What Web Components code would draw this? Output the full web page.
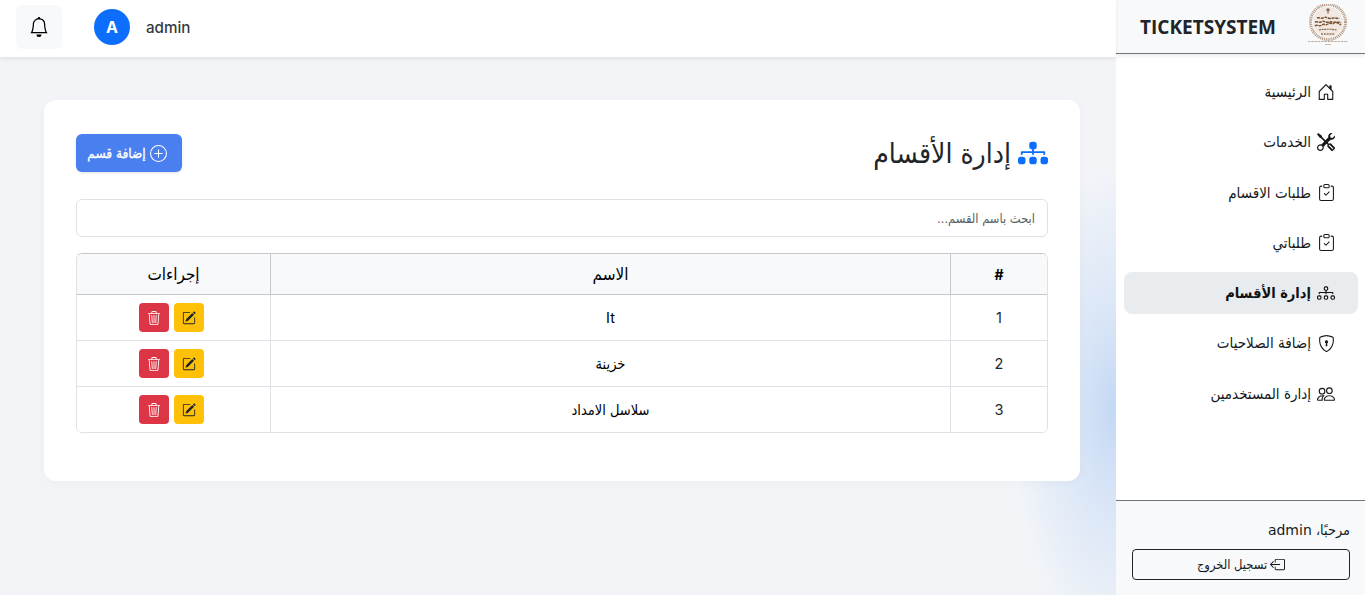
<!DOCTYPE html>
<html lang="ar" dir="rtl">
<head>
<meta charset="utf-8">
<title>إدارة الأقسام</title>
<style>
  html, body { margin: 0; height: 100%; overflow: hidden; }
  body {
    font-family: Inter, "DejaVu Sans Condensed", "DejaVu Sans", sans-serif;
    color: #212529;
    background: #f2f4f8;
  }
</style>
</head>
<body>
<app-shell>
  <side-bar slot="side">
    <nav-item icon="house">الرئيسية</nav-item>
    <nav-item icon="tools">الخدمات</nav-item>
    <nav-item icon="clipboard" size="17">طلبات الاقسام</nav-item>
    <nav-item icon="clipboard" size="17">طلباتي</nav-item>
    <nav-item icon="diagram" active>إدارة الأقسام</nav-item>
    <nav-item icon="shield" size="17">إضافة الصلاحيات</nav-item>
    <nav-item icon="people">إدارة المستخدمين</nav-item>
  </side-bar>
  <top-bar slot="top" user="admin"></top-bar>
  <dept-card>
    <dept-row num="1" name="It"></dept-row>
    <dept-row num="2" name="خزينة"></dept-row>
    <dept-row num="3" name="سلاسل الامداد"></dept-row>
  </dept-card>
</app-shell>

<script>
const ICONS = {
  bell: 'M8 16a2 2 0 0 0 2-2H6a2 2 0 0 0 2 2M8 1.918l-.797.161A4 4 0 0 0 4 6c0 .628-.134 2.197-.459 3.742-.16.767-.376 1.566-.663 2.258h10.244c-.287-.692-.502-1.49-.663-2.258C12.134 8.197 12 6.628 12 6a4 4 0 0 0-3.203-3.92zM14.22 12c.223.447.481.801.78 1H1c.299-.199.557-.553.78-1C2.68 10.2 3 6.88 3 6c0-2.42 1.72-4.44 4.005-4.901a1 1 0 1 1 1.99 0A5 5 0 0 1 13 6c0 .88.32 4.2 1.22 6',
  house: 'M8.354 1.146a.5.5 0 0 0-.708 0l-6 6A.5.5 0 0 0 1.5 7.5v7a.5.5 0 0 0 .5.5h4.5a.5.5 0 0 0 .5-.5v-4h2v4a.5.5 0 0 0 .5.5H14a.5.5 0 0 0 .5-.5v-7a.5.5 0 0 0-.146-.354L13 5.793V2.5a.5.5 0 0 0-.5-.5h-1a.5.5 0 0 0-.5.5v1.293zM2.5 14V7.707l5.5-5.5 5.5 5.5V14H10v-4a.5.5 0 0 0-.5-.5h-3a.5.5 0 0 0-.5.5v4z',
  tools: 'M1 0 0 1l2.2 3.081a1 1 0 0 0 .815.419h.07a1 1 0 0 1 .708.293l2.675 2.675-2.617 2.654A3.003 3.003 0 0 0 0 13a3 3 0 1 0 5.878-.851l2.654-2.617.968.968-.305.914a1 1 0 0 0 .242 1.023l3.27 3.27a.997.997 0 0 0 1.414 0l1.586-1.586a.997.997 0 0 0 0-1.414l-3.27-3.27a1 1 0 0 0-1.023-.242L10.5 9.5l-.96-.96 2.68-2.643A3.005 3.005 0 0 0 16 3q0-.405-.102-.777l-2.14 2.141L12 4l-.364-1.757L13.777.102a3 3 0 0 0-3.675 3.68L7.462 6.46 4.793 3.793a1 1 0 0 1-.293-.707v-.071a1 1 0 0 0-.419-.814zm9.646 10.646a.5.5 0 0 1 .708 0l2.914 2.915a.5.5 0 0 1-.707.707l-2.915-2.914a.5.5 0 0 1 0-.708M3 11l.471.242.529.026.287.445.445.287.026.529L5 13l-.242.471-.026.529-.445.287-.287.445-.529.026L3 15l-.471-.242L2 14.732l-.287-.445L1.268 14l-.026-.529L1 13l.242-.471.026-.529.445-.287.287-.445.529-.026z',
  clipboard: 'M10.854 7.146a.5.5 0 0 1 0 .708l-3 3a.5.5 0 0 1-.708 0l-1.5-1.5a.5.5 0 1 1 .708-.708L7.5 9.793l2.646-2.647a.5.5 0 0 1 .708 0M4 1.5H3a2 2 0 0 0-2 2V14a2 2 0 0 0 2 2h10a2 2 0 0 0 2-2V3.5a2 2 0 0 0-2-2h-1v1h1a1 1 0 0 1 1 1V14a1 1 0 0 1-1 1H3a1 1 0 0 1-1-1V3.5a1 1 0 0 1 1-1h1zM9.5 1a.5.5 0 0 1 .5.5v1a.5.5 0 0 1-.5.5h-3a.5.5 0 0 1-.5-.5v-1a.5.5 0 0 1 .5-.5zm-3-1A1.5 1.5 0 0 0 5 1.5v1A1.5 1.5 0 0 0 6.5 4h3A1.5 1.5 0 0 0 11 2.5v-1A1.5 1.5 0 0 0 9.5 0z',
  diagram: 'M6 3.5A1.5 1.5 0 0 1 7.5 2h1A1.5 1.5 0 0 1 10 3.5v1A1.5 1.5 0 0 1 8.5 6v1H14a.5.5 0 0 1 .5.5v1a.5.5 0 0 1-1 0V8h-5v.5a.5.5 0 0 1-1 0V8h-5v.5a.5.5 0 0 1-1 0v-1A.5.5 0 0 1 2 7h5.5V6A1.5 1.5 0 0 1 6 4.5zM8.5 5a.5.5 0 0 0 .5-.5v-1a.5.5 0 0 0-.5-.5h-1a.5.5 0 0 0-.5.5v1a.5.5 0 0 0 .5.5zM0 11.5A1.5 1.5 0 0 1 1.5 10h1A1.5 1.5 0 0 1 4 11.5v1A1.5 1.5 0 0 1 2.5 14h-1A1.5 1.5 0 0 1 0 12.5zm1.5-.5a.5.5 0 0 0-.5.5v1a.5.5 0 0 0 .5.5h1a.5.5 0 0 0 .5-.5v-1a.5.5 0 0 0-.5-.5zm4.5.5A1.5 1.5 0 0 1 7.5 10h1a1.5 1.5 0 0 1 1.5 1.5v1A1.5 1.5 0 0 1 8.5 14h-1A1.5 1.5 0 0 1 6 12.5zm1.5-.5a.5.5 0 0 0-.5.5v1a.5.5 0 0 0 .5.5h1a.5.5 0 0 0 .5-.5v-1a.5.5 0 0 0-.5-.5zm4.5.5a1.5 1.5 0 0 1 1.5-1.5h1a1.5 1.5 0 0 1 1.5 1.5v1a1.5 1.5 0 0 1-1.5 1.5h-1a1.5 1.5 0 0 1-1.5-1.5zm1.5-.5a.5.5 0 0 0-.5.5v1a.5.5 0 0 0 .5.5h1a.5.5 0 0 0 .5-.5v-1a.5.5 0 0 0-.5-.5z',
  diagramFill: 'M6 3.5A1.5 1.5 0 0 1 7.5 2h1A1.5 1.5 0 0 1 10 3.5v1A1.5 1.5 0 0 1 8.5 6v1H14a.5.5 0 0 1 .5.5v1a.5.5 0 0 1-1 0V8h-5v.5a.5.5 0 0 1-1 0V8h-5v.5a.5.5 0 0 1-1 0v-1A.5.5 0 0 1 2 7h5.5V6A1.5 1.5 0 0 1 6 4.5zm-6 8A1.5 1.5 0 0 1 1.5 10h1A1.5 1.5 0 0 1 4 11.5v1A1.5 1.5 0 0 1 2.5 14h-1A1.5 1.5 0 0 1 0 12.5zm6 0A1.5 1.5 0 0 1 7.5 10h1a1.5 1.5 0 0 1 1.5 1.5v1A1.5 1.5 0 0 1 8.5 14h-1A1.5 1.5 0 0 1 6 12.5zm6 0a1.5 1.5 0 0 1 1.5-1.5h1a1.5 1.5 0 0 1 1.5 1.5v1a1.5 1.5 0 0 1-1.5 1.5h-1a1.5 1.5 0 0 1-1.5-1.5z',
  shield: 'M5.338 1.59a61 61 0 0 0-2.837.856.48.48 0 0 0-.328.39c-.554 4.157.726 7.19 2.253 9.188a10.7 10.7 0 0 0 2.287 2.233c.346.244.652.42.893.533q.18.085.293.118a1 1 0 0 0 .101.025 1 1 0 0 0 .1-.025q.114-.034.294-.118c.24-.113.547-.29.893-.533a10.7 10.7 0 0 0 2.287-2.233c1.527-1.997 2.807-5.031 2.253-9.188a.48.48 0 0 0-.328-.39c-.651-.213-1.75-.56-2.837-.855C9.552 1.29 8.531 1.067 8 1.067c-.53 0-1.552.223-2.662.524zM5.072.56C6.157.265 7.31 0 8 0s1.843.265 2.928.56c1.11.3 2.229.655 2.887.87a1.54 1.54 0 0 1 1.044 1.262c.596 4.477-.787 7.795-2.465 9.99a11.8 11.8 0 0 1-2.517 2.453 7 7 0 0 1-1.048.625c-.28.132-.581.24-.829.24s-.548-.108-.829-.24a7 7 0 0 1-1.048-.625 11.8 11.8 0 0 1-2.517-2.453C1.928 10.487.545 7.169 1.141 2.692A1.54 1.54 0 0 1 2.185 1.43 63 63 0 0 1 5.072.56M9.5 6.5a1.5 1.5 0 0 1-1 1.415l.385 1.99a.5.5 0 0 1-.491.595h-.788a.5.5 0 0 1-.49-.595l.384-1.99a1.5 1.5 0 1 1 2-1.415',
  people: 'M15 14s1 0 1-1-1-4-5-4-5 3-5 4 1 1 1 1zm-7.978-1L7 12.996c.001-.264.167-1.03.76-1.72C8.312 10.629 9.282 10 11 10c1.717 0 2.687.63 3.24 1.276.593.69.758 1.457.76 1.72l-.008.002-.014.002zM11 7a2 2 0 1 0 0-4 2 2 0 0 0 0 4m3-2a3 3 0 1 1-6 0 3 3 0 0 1 6 0M6.936 9.28a6 6 0 0 0-1.23-.247A7 7 0 0 0 5 9c-4 0-5 3-5 4q0 1 1 1h4.216A2.24 2.24 0 0 1 5 13c0-1.01.377-2.042 1.09-2.904.243-.294.526-.569.846-.816M4.92 10A5.5 5.5 0 0 0 4 13H1c0-.26.164-1.03.76-1.724.545-.636 1.492-1.256 3.16-1.275ZM1.5 5.5a3 3 0 1 1 6 0 3 3 0 0 1-6 0m3-2a2 2 0 1 0 0 4 2 2 0 0 0 0-4',
  logout: 'M6 12.5a.5.5 0 0 0 .5.5h8a.5.5 0 0 0 .5-.5v-9a.5.5 0 0 0-.5-.5h-8a.5.5 0 0 0-.5.5v2a.5.5 0 0 1-1 0v-2A1.5 1.5 0 0 1 6.5 2h8A1.5 1.5 0 0 1 16 3.5v9a1.5 1.5 0 0 1-1.5 1.5h-8A1.5 1.5 0 0 1 5 12.5v-2a.5.5 0 0 1 1 0zM.146 8.354a.5.5 0 0 1 0-.708l3-3a.5.5 0 1 1 .708.708L1.707 7.5H10.5a.5.5 0 0 1 0 1H1.707l2.147 2.146a.5.5 0 0 1-.708.708z',
  plus: 'M8 15A7 7 0 1 1 8 1a7 7 0 0 1 0 14m0 1A8 8 0 1 0 8 0a8 8 0 0 0 0 16M8 4a.5.5 0 0 1 .5.5v3h3a.5.5 0 0 1 0 1h-3v3a.5.5 0 0 1-1 0v-3h-3a.5.5 0 0 1 0-1h3v-3A.5.5 0 0 1 8 4',
  edit: 'M15.502 1.94a.5.5 0 0 1 0 .706L14.459 3.69l-2-2L13.502.646a.5.5 0 0 1 .707 0l1.293 1.293zm-1.75 2.456-2-2L4.939 9.21a.5.5 0 0 0-.121.196l-.805 2.414a.25.25 0 0 0 .316.316l2.414-.805a.5.5 0 0 0 .196-.12l6.813-6.814zM1 13.5A1.5 1.5 0 0 0 2.5 15h11a1.5 1.5 0 0 0 1.5-1.5v-6a.5.5 0 0 0-1 0v6a.5.5 0 0 1-.5.5h-11a.5.5 0 0 1-.5-.5v-11a.5.5 0 0 1 .5-.5H9a.5.5 0 0 0 0-1H2.5A1.5 1.5 0 0 0 1 2.5z',
  trash: 'M6.5 1h3a.5.5 0 0 1 .5.5v1H6v-1a.5.5 0 0 1 .5-.5M11 2.5v-1A1.5 1.5 0 0 0 9.5 0h-3A1.5 1.5 0 0 0 5 1.5v1H1.5a.5.5 0 0 0 0 1h.538l.853 10.66A2 2 0 0 0 4.885 16h6.23a2 2 0 0 0 1.994-1.84l.853-10.66h.538a.5.5 0 0 0 0-1zm1.958 1-.846 10.58a1 1 0 0 1-.997.92h-6.23a1 1 0 0 1-.997-.92L3.042 3.5zm-7.487 1a.5.5 0 0 1 .528.47l.5 8.5a.5.5 0 0 1-.998.06L5 5.03a.5.5 0 0 1 .47-.53Zm5.058 0a.5.5 0 0 1 .47.53l-.5 8.5a.5.5 0 1 1-.998-.06l.5-8.5a.5.5 0 0 1 .528-.47M8 4.5a.5.5 0 0 1 .5.5v8.5a.5.5 0 0 1-1 0V5a.5.5 0 0 1 .5-.5'
};

const AR_FONT = '"DejaVu Sans Condensed", "DejaVu Sans", sans-serif';

class AppIcon extends HTMLElement {
  connectedCallback() {
    const size = this.getAttribute("size") || 16;
    const root = this.attachShadow({ mode: "open" });
    root.innerHTML = `
      <style>:host { display: inline-flex; flex: none; } svg { display: block; }</style>
      <svg width="${size}" height="${size}" viewBox="0 0 16 16" fill="currentColor" aria-hidden="true">
        <path d="${ICONS[this.getAttribute("name")]}"></path>
      </svg>`;
  }
}
customElements.define("app-icon", AppIcon);

class AppShell extends HTMLElement {
  constructor() {
    super();
    this.attachShadow({ mode: "open" }).innerHTML = `
      <style>
        :host {
          display: flex;
          height: 595px;
          background:
            radial-gradient(ellipse 105px 240px at 1116px 410px, #c3d8f4 0%, rgba(201,220,246,.6) 40%, rgba(242,244,248,0) 100%),
            #f2f4f8;
        }
        .side { flex: 0 0 249px; overflow: hidden; }
        .main { flex: 1; min-width: 0; display: flex; flex-direction: column; }
        .content { padding: 43px 36px 0 44px; }
      </style>
      <div class="side"><slot name="side"></slot></div>
      <div class="main">
        <slot name="top"></slot>
        <div class="content"><slot></slot></div>
      </div>`;
  }
}
customElements.define("app-shell", AppShell);

class SideBar extends HTMLElement {
  constructor() {
    super();
    this.attachShadow({ mode: "open" }).innerHTML = `
      <style>
        :host {
          display: flex;
          flex-direction: column;
          height: 595px;
          background: #fff;
        }
        header {
          height: 54px;
          box-sizing: border-box;
          display: flex;
          align-items: center;
          justify-content: space-between;
          padding: 0 16px 0 24px;
          background: #f8f9fa;
          border-bottom: 1px solid #6c757d;
          box-shadow: 0 2px 4px rgba(0,0,0,.08);
        }
        svg.logo { display: block; align-self: flex-start; margin-top: 4px; }
        .brand { font: 700 19px "Open Sans", sans-serif; color: #212529; }
        nav {
          flex: 1;
          display: flex;
          flex-direction: column;
          gap: 8.25px;
          padding: 17px 7px 0 8px;
        }
        footer {
          height: 95px;
          box-sizing: border-box;
          border-top: 1px solid #6c757d;
          background: #f8f9fa;
          padding: 19px 15px 0 16px;
          display: flex;
          flex-direction: column;
        }
        .hello { font: 14.4px/20px ${AR_FONT}; color: #16191c; }
        .hello span { font: 14px "DejaVu Sans", sans-serif; }
        button {
          margin-top: 9px;
          height: 31px;
          display: flex;
          align-items: center;
          justify-content: center;
          gap: 3px;
          background: transparent;
          border: 1px solid #212529;
          border-radius: 4px;
          color: #16191c;
          font: 12.8px ${AR_FONT};
        }
      </style>
      <header>
        <svg class="logo" width="42" height="42" viewBox="0 0 42 42" fill="none" aria-hidden="true">
          <circle cx="21" cy="18" r="17.5" stroke="#b89c86" stroke-width="3" stroke-dasharray="1.1 .8"></circle>
          <circle cx="21" cy="18" r="15" fill="#f1e9e1"></circle>
          <path d="M8 22c2-2 4 1 7-1s3 1 6-1 4 1 6-1 5 1 7 2M8 18c2-1 4 1 6 0s3-1 5 0 4-1 7 0 5-1 8 1M10 14c2-1 4 1 6 0s3-1 5 0 4 0 6 0 4 0 5 1" stroke="#7a5233" stroke-width="1.4" stroke-dasharray="3 .7"></path>
          <path d="M12 26c4-1 12-1 18 0" stroke="#8a6548" stroke-width="1.1" stroke-dasharray="2 .6"></path>
          <path d="M21 4v5.500M19 6h4" stroke="#6f4e38" stroke-width="1.1"></path>
          <path d="M14 30h14" stroke="#9a7c65" stroke-width="1.3" stroke-dasharray="2 .8"></path>
          <path d="M1 37.500h40" stroke="#bcaa9c" stroke-width="1.2" stroke-dasharray="2.4 .9"></path>
          <path d="M18 40.500h6" stroke="#cbbdb2" stroke-width="1"></path>
        </svg>
        <span class="brand">TICKETSYSTEM</span>
      </header>
      <nav><slot></slot></nav>
      <footer>
        <div class="hello">مرحبًا، <span>admin</span></div>
        <button type="button"><app-icon name="logout" size="15"></app-icon><span>تسجيل الخروج</span></button>
      </footer>`;
  }
}
customElements.define("side-bar", SideBar);

class NavItem extends HTMLElement {
  connectedCallback() {
    const size = this.getAttribute("size") || 18;
    this.attachShadow({ mode: "open" }).innerHTML = `
      <style>
        :host {
          display: flex;
          align-items: center;
          height: 42px;
          padding: 0 23px 0 12px;
          border-radius: 8px;
          font: 15px ${AR_FONT};
          color: #16191c;
        }
        :host([active]) { background: #e9ecef; color: #111; font-weight: 700; font-size: 14.5px; }
        .ico { width: 18px; display: flex; justify-content: center; margin-left: 6px; }
      </style>
      <div class="ico"><app-icon name="${this.getAttribute("icon")}" size="${size}"></app-icon></div>
      <span><slot></slot></span>`;
  }
}
customElements.define("nav-item", NavItem);

class TopBar extends HTMLElement {
  connectedCallback() {
    const user = this.getAttribute("user");
    this.attachShadow({ mode: "open" }).innerHTML = `
      <style>
        :host {
          display: flex;
          direction: ltr;
          align-items: center;
          height: 57px;
          padding: 0 0 3px 16px;
          box-sizing: border-box;
          background: #fff;
          box-shadow: 0 2px 4px rgba(0,0,0,.08);
        }
        .bell {
          width: 46px;
          height: 44px;
          display: flex;
          align-items: center;
          justify-content: center;
          background: #f8f9fa;
          border-radius: 6px;
          color: #000;
        }
        .avatar {
          width: 36px;
          height: 36px;
          margin-left: 32px;
          border-radius: 50%;
          background: #0d6efd;
          color: #fff;
          display: flex;
          align-items: center;
          justify-content: center;
          font: 700 16px Inter, sans-serif;
        }
        .name { margin-left: 16px; font: 500 15.2px Inter, sans-serif; color: #343a40; }
      </style>
      <div class="bell"><app-icon name="bell" size="20"></app-icon></div>
      <div class="avatar">${user[0].toUpperCase()}</div>
      <span class="name">${user}</span>`;
  }
}
customElements.define("top-bar", TopBar);

class DeptRow extends HTMLElement {
  connectedCallback() {
    this.attachShadow({ mode: "open" }).innerHTML = `
      <style>
        :host {
          display: grid;
          grid-template-columns: 96px 1fr 193px;
          height: 46px;
          box-sizing: border-box;
          border-bottom: 1px solid #dee2e6;
          font: 14.5px Inter, ${AR_FONT};
          color: #212529;
        }
        div { display: flex; align-items: center; justify-content: center; }
        .name { border-inline: 1px solid #dee2e6; color: #000; }
        .actions { gap: 5px; padding-right: 4px; }
        .act {
          width: 30px;
          height: 29px;
          border-radius: 4px;
        }
        .edit { background: #ffc107; color: #212529; }
        .del { background: #dc3545; color: #fff; }
      </style>
      <div>${this.getAttribute("num")}</div>
      <div class="name">${this.getAttribute("name")}</div>
      <div class="actions">
        <div class="act edit"><app-icon name="edit" size="14"></app-icon></div>
        <div class="act del"><app-icon name="trash" size="14"></app-icon></div>
      </div>`;
  }
}
customElements.define("dept-row", DeptRow);

class DeptCard extends HTMLElement {
  constructor() {
    super();
    this.attachShadow({ mode: "open" }).innerHTML = `
      <style>
        :host {
          display: block;
          height: 381px;
          box-sizing: border-box;
          padding: 34px 32px 0;
          background: #fff;
          border-radius: 12px;
          box-shadow: 0 2px 12px rgba(0,0,0,.03);
        }
        .head {
          display: flex;
          align-items: center;
          justify-content: space-between;
          height: 38px;
        }
        h2 {
          margin: 0;
          display: flex;
          align-items: center;
          gap: 7px;
          font: 400 28px ${AR_FONT};
          color: #212529;
        }
        h2 app-icon { color: #0d6efd; }
        .add {
          width: 106px;
          height: 38px;
          display: flex;
          align-items: center;
          justify-content: center;
          gap: 4px;
          border: 0;
          border-radius: 6px;
          padding: 0 4px 0 0;
          background: #4a7ff0;
          color: #fff;
          font: 400 13.5px ${AR_FONT};
          -webkit-text-stroke: .3px #fff;
          white-space: nowrap;
          box-shadow: 0 1px 3px rgba(0,0,0,.12);
        }
        .search {
          display: block;
          width: 100%;
          box-sizing: border-box;
          height: 38px;
          margin-top: 27px;
          padding: 0 12px;
          border: 1px solid #dee2e6;
          border-radius: 6px;
          font: 12.8px ${AR_FONT};
          color: #212529;
        }
        .search::placeholder { color: #595f65; opacity: 1; }
        .table {
          margin-top: 16px;
          border: 1px solid #dee2e6;
          border-top-color: #c4c8cc;
          border-bottom: 0;
          border-radius: 6px;
          overflow: hidden;
        }
        .th {
          display: grid;
          grid-template-columns: 96px 1fr 193px;
          height: 41px;
          box-sizing: border-box;
          background: #f8f9fa;
          border-bottom: 1px solid #c4c8cc;
          font: 17px ${AR_FONT};
          color: #000;
        }
        .th div { display: flex; align-items: center; justify-content: center; }
        .th .mid { border-inline: 1px solid #c4c8cc; }
        .th .hash { font: 700 14px Inter, sans-serif; }
      </style>
      <div class="head">
        <h2><app-icon name="diagramFill" size="30"></app-icon><span>إدارة الأقسام</span></h2>
        <button class="add" type="button"><app-icon name="plus" size="17"></app-icon><span>إضافة قسم</span></button>
      </div>
      <input class="search" type="text" placeholder="ابحث باسم القسم...">
      <div class="table">
        <div class="th"><div class="hash">#</div><div class="mid">الاسم</div><div>إجراءات</div></div>
        <slot></slot>
      </div>`;
  }
}
customElements.define("dept-card", DeptCard);
</script>
</body>
</html>
